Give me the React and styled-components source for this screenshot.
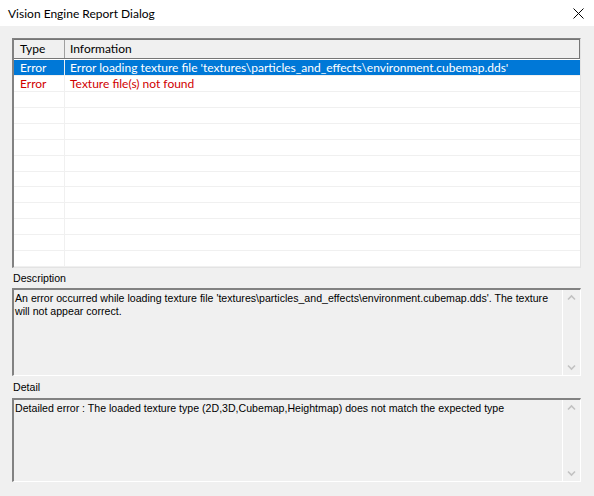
import React from "react";
import styled, { createGlobalStyle } from "styled-components";

const GlobalStyle = createGlobalStyle`
  html, body {
    margin: 0;
    padding: 0;
    background: #f0f0f0;
  }
`;

const Window = styled.div`
  width: 594px;
  height: 496px;
  background: #f0f0f0;
  display: flex;
  flex-direction: column;
  overflow: hidden;
  font-family: Lato, "Noto Sans", sans-serif;
`;

const TitleBar = styled.div`
  height: 26px;
  background: #fff;
  display: flex;
  align-items: center;
  justify-content: space-between;
  padding: 0 10px 0 8px;
  font-size: 12px;
  color: #000;
`;

const Content = styled.div`
  display: flex;
  flex-direction: column;
  padding: 12px 13px 0 12px;
`;

const ListBox = styled.div`
  height: 230px;
  box-sizing: border-box;
  background: #fff;
  border-top: 1px solid #828282;
  border-left: 2px solid #828282;
  border-right: 1px solid #e3e3e3;
  border-bottom: 1px solid #e3e3e3;
  display: flex;
  flex-direction: column;
  overflow: hidden;
`;

const Row = styled.div`
  display: grid;
  grid-template-columns: 51px 1fr;
  height: 16px;
  box-sizing: border-box;
  border-bottom: 1px solid #f0f0f0;
  font-size: 12px;
  line-height: 15px;
  background: ${(p) => (p.$selected ? "#0078d7" : "#fff")};
  color: ${(p) => (p.$selected ? "#fff" : p.$error ? "#d00000" : "#000")};
`;

const Cell = styled.div`
  padding-left: ${(p) => p.$pad || 5}px;
  white-space: nowrap;
  border-right: ${(p) => (p.$first ? "1px solid #f0f0f0" : "none")};
`;

const Header = styled.div`
  display: grid;
  grid-template-columns: 51px 1fr;
  height: 20px;
  box-sizing: border-box;
  background: #f0f0f0;
  border: 1px solid #767676;
  border-left: none;
  margin-bottom: 1px;
  font-size: 12px;
  line-height: 18px;
`;

const HeadCell = styled.div`
  padding-left: ${(p) => p.$pad || 5}px;
  border-right: ${(p) => (p.$first ? "1px solid #a0a0a0" : "none")};
`;

const Label = styled.div`
  font-family: "Liberation Sans", Arial, sans-serif;
  font-size: 10.6px;
  height: ${(p) => p.$h}px;
  display: flex;
  align-items: center;
  padding-left: 1px;
`;

const TextBox = styled.div`
  height: ${(p) => p.$h}px;
  box-sizing: border-box;
  background: #f0f0f0;
  border-top: 2px solid #828282;
  border-left: 2px solid #828282;
  border-right: 1px solid #fff;
  border-bottom: 1px solid #fff;
  display: flex;
`;

const TextArea = styled.div`
  flex: 1;
  padding: 2px 2px 2px 1px;
  font-family: "Liberation Sans", Arial, sans-serif;
  font-size: 10.6px;
  line-height: 13px;
  color: #000;
`;

const ScrollBar = styled.div`
  width: 17px;
  border-left: 1px solid #fff;
  display: flex;
  flex-direction: column;
  justify-content: space-between;
  align-items: center;
  padding: 4px 0;
`;

const Chevron = ({ up }) => (
  <svg width="9" height="7" viewBox="0 0 9 7">
    <path
      d={up ? "M1 5.5 L4.5 2 L8 5.5" : "M1 1.5 L4.5 5 L8 1.5"}
      stroke="#c2c2c2"
      strokeWidth="1.6"
      fill="none"
    />
  </svg>
);

const CloseIcon = () => (
  <svg width="11" height="11" viewBox="0 0 11 11">
    <path d="M0.5 0.5 L10.5 10.5 M10.5 0.5 L0.5 10.5" stroke="#000" strokeWidth="1" />
  </svg>
);

const rows = [
  {
    type: "Error",
    info: "Error loading texture file 'textures\\particles_and_effects\\environment.cubemap.dds'",
    selected: true,
  },
  { type: "Error", info: "Texture file(s) not found", error: true },
];

const App = () => {
  const filled = [...rows];
  while (filled.length < 13) filled.push({ type: "", info: "" });

  return (
    <>
      <GlobalStyle />
      <Window>
        <TitleBar>
          <span>Vision Engine Report Dialog</span>
          <CloseIcon />
        </TitleBar>
        <Content>
          <ListBox>
            <Header>
              <HeadCell $first $pad={6}>Type</HeadCell>
              <HeadCell>Information</HeadCell>
            </Header>
            {filled.map((r, i) => (
              <Row key={i} $selected={r.selected} $error={r.error}>
                <Cell $first $pad={6}>{r.type}</Cell>
                <Cell>{r.info}</Cell>
              </Row>
            ))}
          </ListBox>
          <Label $h={20}>Description</Label>
          <TextBox $h={88}>
            <TextArea>
              An error occurred while loading texture file
              'textures\particles_and_effects\environment.cubemap.dds'. The texture will not appear
              correct.
            </TextArea>
            <ScrollBar>
              <Chevron up />
              <Chevron />
            </ScrollBar>
          </TextBox>
          <Label $h={22}>Detail</Label>
          <TextBox $h={84}>
            <TextArea>
              Detailed error : The loaded texture type (2D,3D,Cubemap,Heightmap) does not match the
              expected type
            </TextArea>
            <ScrollBar>
              <Chevron up />
              <Chevron />
            </ScrollBar>
          </TextBox>
        </Content>
      </Window>
    </>
  );
};

export default App;
